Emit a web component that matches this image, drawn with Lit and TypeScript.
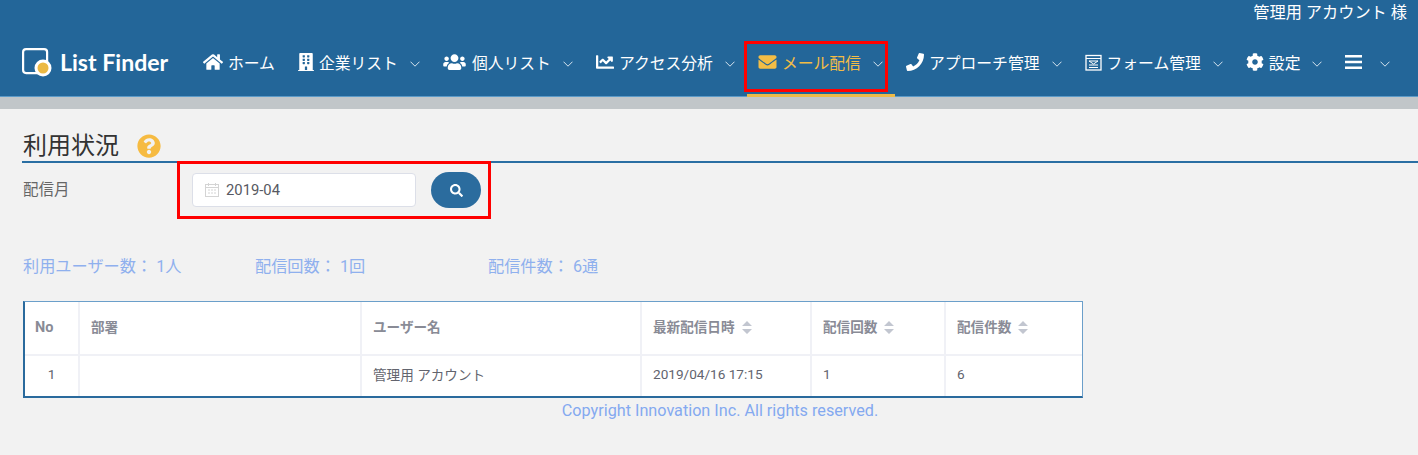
import { LitElement, html, css, svg } from "lit";
import { customElement } from "lit/decorators.js";

const chevron = html`<svg class="chev" viewBox="0 0 10 6"><path d="M.5 .7l4.500 4.500 4.500-4.500" fill="none" stroke="currentColor" stroke-width="1"/></svg>`;

const ic = (vb: string, d: string, cls = "") =>
  html`<svg class="ico ${cls}" viewBox="${vb}"><path fill="currentColor" d="${d}"/></svg>`;

const formIcon = html`<svg class="ico form" viewBox="0 0 17 17" fill="none" stroke="currentColor">
  <rect x="1" y="1.500" width="15" height="14.500" stroke-width="1.300"/>
  ${svg`<path d="M1 4.500h15M4 7h9l-4.500 3zM4 11h9M4 13.500h9" stroke-width="1"/>`}
</svg>`;

const NAV = [
  { label: "ホーム", chev: false, icon: ic("0 0 576 512", "M280.37 148.26L96 300.11V464a16 16 0 0 0 16 16l112.06-.29a16 16 0 0 0 15.92-16V368a16 16 0 0 1 16-16h64a16 16 0 0 1 16 16v95.64a16 16 0 0 0 16 16.05L464 480a16 16 0 0 0 16-16V300L295.67 148.26a12.19 12.19 0 0 0-15.3 0zM571.6 251.47L488 182.56V44.05a12 12 0 0 0-12-12h-56a12 12 0 0 0-12 12v72.61L318.47 43a48 48 0 0 0-61 0L4.34 251.47a12 12 0 0 0-1.6 16.9l25.5 31A12 12 0 0 0 45.15 301l235.22-193.74a12.19 12.19 0 0 1 15.3 0L530.9 301a12 12 0 0 0 16.9-1.6l25.5-31a12 12 0 0 0-1.7-16.93z") },
  { label: "企業リスト", chev: true, icon: ic("0 0 448 512", "M436 480h-20V24c0-13.255-10.745-24-24-24H56C42.745 0 32 10.745 32 24v456H12c-6.627 0-12 5.373-12 12v20h448v-20c0-6.627-5.373-12-12-12zM128 76c0-6.627 5.373-12 12-12h40c6.627 0 12 5.373 12 12v40c0 6.627-5.373 12-12 12h-40c-6.627 0-12-5.373-12-12V76zm0 96c0-6.627 5.373-12 12-12h40c6.627 0 12 5.373 12 12v40c0 6.627-5.373 12-12 12h-40c-6.627 0-12-5.373-12-12v-40zm52 148h-40c-6.627 0-12-5.373-12-12v-40c0-6.627 5.373-12 12-12h40c6.627 0 12 5.373 12 12v40c0 6.627-5.373 12-12 12zm76 160h-64v-84c0-6.627 5.373-12 12-12h40c6.627 0 12 5.373 12 12v84zm64-172c0 6.627-5.373 12-12 12h-40c-6.627 0-12-5.373-12-12v-40c0-6.627 5.373-12 12-12h40c6.627 0 12 5.373 12 12v40zm0-96c0 6.627-5.373 12-12 12h-40c-6.627 0-12-5.373-12-12v-40c0-6.627 5.373-12 12-12h40c6.627 0 12 5.373 12 12v40zm0-96c0 6.627-5.373 12-12 12h-40c-6.627 0-12-5.373-12-12V76c0-6.627 5.373-12 12-12h40c6.627 0 12 5.373 12 12v40z", "building") },
  { label: "個人リスト", chev: true, icon: ic("0 0 640 512", "M96 224c35.3 0 64-28.7 64-64s-28.7-64-64-64-64 28.7-64 64 28.7 64 64 64zm448 0c35.3 0 64-28.7 64-64s-28.7-64-64-64-64 28.7-64 64 28.7 64 64 64zm32 32h-64c-17.6 0-33.5 7.1-45.1 18.6 40.3 22.1 68.9 62 75.1 109.4h66c17.7 0 32-14.3 32-32v-32c0-35.3-28.7-64-64-64zm-256 0c61.9 0 112-50.1 112-112S381.9 32 320 32 208 82.1 208 144s50.1 112 112 112zm76.8 32h-8.3c-20.8 10-43.9 16-68.5 16s-47.6-6-68.5-16h-8.3C179.6 288 128 339.6 128 403.2V432c0 26.5 21.500 48 48 48h288c26.500 0 48-21.500 48-48v-28.800c0-63.600-51.600-115.200-115.200-115.200zm-223.700-13.400C161.500 263.100 145.600 256 128 256H64c-35.300 0-64 28.700-64 64v32c0 17.700 14.300 32 32 32h65.900c6.300-47.400 34.900-87.300 75.200-109.400z", "users") },
  { label: "アクセス分析", chev: true, icon: ic("0 0 512 512", "M496 384H64V80c0-8.84-7.16-16-16-16H16C7.16 64 0 71.16 0 80v336c0 17.67 14.33 32 32 32h464c8.84 0 16-7.16 16-16v-32c0-8.84-7.16-16-16-16zM464 96H345.94c-21.38 0-32.09 25.85-16.97 40.97l32.4 32.4L288 242.75l-73.37-73.37c-12.5-12.5-32.76-12.5-45.25 0l-68.69 68.69c-6.25 6.25-6.25 16.38 0 22.63l22.62 22.62c6.25 6.25 16.38 6.25 22.63 0L192 237.25l73.37 73.37c12.5 12.5 32.76 12.5 45.25 0l96-96 32.4 32.4c15.12 15.12 40.97 4.41 40.97-16.97V112c.01-8.84-7.15-16-15.99-16z", "w18") },
  { label: "メール配信", chev: true, active: true, icon: ic("0 0 512 512", "M502.3 190.8c3.9-3.1 9.7-.2 9.7 4.7V400c0 26.5-21.5 48-48 48H48c-26.5 0-48-21.5-48-48V195.6c0-5 5.7-7.8 9.7-4.7 22.4 17.4 52.1 39.5 154.1 113.6 21.1 15.4 56.7 47.8 92.2 47.6 35.7.3 72-32.8 92.3-47.6 102-74.1 131.6-96.3 154-113.7zM256 320c23.2.4 56.6-29.2 73.4-41.4 132.7-96.3 142.8-104.7 173.4-128.7 5.8-4.5 9.2-11.5 9.2-18.9v-19c0-26.5-21.5-48-48-48H48C21.5 64 0 85.5 0 112v19c0 7.4 3.4 14.3 9.2 18.9 30.6 23.9 40.7 32.4 173.4 128.7 16.8 12.2 50.2 41.8 73.4 41.4z", "w19") },
  { label: "アプローチ管理", chev: true, icon: ic("0 0 512 512", "M493.4 24.6l-104-24c-11.3-2.6-22.9 3.3-27.5 13.9l-48 112c-4.2 9.8-1.4 21.3 6.9 28l60.6 49.6c-36 76.7-98.9 140.5-177.2 177.2l-49.6-60.6c-6.8-8.3-18.2-11.1-28-6.9l-112 48C3.9 366.5-2 378.1.6 389.4l24 104C27.1 504.2 36.7 512 48 512c256.1 0 464-207.5 464-464 0-11.2-7.7-20.9-18.6-23.4z", "w18") },
  { label: "フォーム管理", chev: true, icon: formIcon },
  { label: "設定", chev: true, icon: ic("0 0 512 512", "M487.4 315.7l-42.6-24.6c4.3-23.2 4.3-47 0-70.2l42.6-24.6c4.9-2.8 7.1-8.6 5.5-14-11.1-35.6-30-67.8-54.7-94.6-3.8-4.1-10-5.1-14.8-2.3L380.8 110c-17.9-15.4-38.5-27.3-60.8-35.1V25.8c0-5.6-3.9-10.5-9.4-11.7-36.7-8.2-74.3-7.8-109.2 0-5.5 1.2-9.4 6.1-9.4 11.7V75c-22.2 7.9-42.8 19.8-60.8 35.1L88.7 85.5c-4.9-2.8-11-1.9-14.8 2.3-24.7 26.7-43.6 58.9-54.7 94.6-1.7 5.4.6 11.2 5.5 14L67.3 221c-4.3 23.2-4.3 47 0 70.2l-42.6 24.6c-4.9 2.8-7.1 8.6-5.5 14 11.1 35.6 30 67.8 54.7 94.6 3.8 4.1 10 5.1 14.8 2.3l42.6-24.6c17.9 15.4 38.5 27.3 60.8 35.1v49.2c0 5.6 3.9 10.5 9.4 11.7 36.7 8.2 74.3 7.8 109.2 0 5.5-1.2 9.4-6.1 9.4-11.7v-49.2c22.2-7.9 42.8-19.8 60.8-35.1l42.6 24.6c4.9 2.8 11 1.9 14.8-2.3 24.7-26.7 43.6-58.9 54.7-94.6 1.5-5.5-.7-11.3-5.6-14.1zM256 336c-44.1 0-80-35.9-80-80s35.9-80 80-80 80 35.9 80 80-35.9 80-80 80z", "w18") },
  { label: "", chev: true, icon: html`<svg class="ico bars" viewBox="0 0 17 14"><path fill="currentColor" d="M0 0h17v2.600H0zM0 5.700h17v2.600H0zM0 11.400h17V14H0z"/></svg>` },
];

const sortIcon = html`<svg class="sort" viewBox="0 0 10 13"><path fill="currentColor" d="M5 0l5 5H0zM0 8h10l-5 5z"/></svg>`;

const COLS = [
  { label: "No", cls: "c1" },
  { label: "部署", cls: "c2" },
  { label: "ユーザー名", cls: "c3" },
  { label: "最新配信日時", cls: "c4", sort: true },
  { label: "配信回数", cls: "c5", sort: true },
  { label: "配信件数", cls: "c6", sort: true },
];
const ROW = ["1", "", "管理用 アカウント", "2019/04/16 17:15", "1", "6"];

@customElement("app-root")
export class AppRoot extends LitElement {
  static styles = css`
    :host {
      display: block;
      position: relative;
      min-height: 455px;
      background: #f2f2f2;
      font-family: Roboto, "Noto Sans CJK JP", sans-serif;
      overflow: hidden;
    }
    .header { background: #236699; height: 97px; color: #fff; box-shadow: inset 0 -1px 0 #5b9ac8; }
    .user { height: 30px; display: flex; justify-content: flex-end; padding: 3px 11px 0 0; box-sizing: border-box; font-size: 16.200px; line-height: 20px; }
    .nav { display: flex; height: 67px; padding-left: 22px; }
    .logo { width: 170px; display: flex; align-items: center; gap: 8px; flex: none; padding-bottom: 3px; box-sizing: border-box; }
    .logo-mark { width: 30px; height: 30px; flex: none; }
    .logo-text { font-family: Lato, sans-serif; font-size: 23.100px; font-weight: 700; white-space: nowrap; }
    .item { display: flex; align-items: center; padding: 0 12px 0 11px; position: relative; font-size: 15.800px; white-space: nowrap; padding-bottom: 3px; box-sizing: border-box; }
    .item.active { color: #f3bd45; }
    .item.active::after { content: ""; position: absolute; left: 0; right: 0; bottom: 0; height: 3px; background: #eebb47; }
    .ico { height: 18px; width: 20px; flex: none; margin-right: 5px; }
    .ico.building { width: 16px; }
    .ico.users { width: 23px; margin-right: 6px; }
    .ico.w18 { width: 18px; }
    .ico.w19 { width: 19px; }
    .ico.form { width: 17px; margin-right: 5px; height: 17px; }
    .ico.bars { width: 17px; height: 14px; margin-right: 6px; }
    .chev { width: 10px; height: 6px; margin: 4px 0 0 12px; flex: none; color: #d5e3ee; }
    .band { height: 12px; background: #c1c6c9; }
    .content { padding: 22px 0 0 22px; }
    .title-row { display: flex; align-items: center; height: 30px; border-bottom: 2px solid #2a6fa3; color: #333; padding-left: 1px; }
    .title { font-size: 24px; line-height: 30px; margin: 0; font-weight: 400; }
    .help { width: 24px; height: 24px; margin-left: 18px; color: #f6bb42; flex: none; }
    .filter { display: flex; align-items: center; height: 51px; margin-left: 1px; }
    .filter-label { width: 169px; font-size: 15.500px; color: #666; flex: none; margin-top: -2px; }
    .input { width: 224px; height: 34px; box-sizing: border-box; background: #fff; border: 1px solid #dcdfe8; border-radius: 4px; display: flex; align-items: center; padding-left: 12px; gap: 7px; font-size: 14.800px; color: #575962; margin-top: 3px; }
    .cal { width: 14px; height: 14px; color: #d4d4d4; flex: none; }
    .search { width: 50px; height: 36px; border-radius: 18px; background: #2b6c9e; border: 0; margin-left: 15px; padding: 0; display: flex; align-items: center; justify-content: center; color: #fff; margin-top: 3px; }
    .search svg { width: 13px; height: 13px; }
    .summary { display: flex; height: 24px; margin-top: 39px; align-items: center; margin-left: 1px; font-size: 16.200px; color: #8fb0ee; }
    .s1 { width: 232px; }
    .s2 { width: 233px; }
    table { border-collapse: separate; border-spacing: 0; table-layout: fixed; width: 1059px; margin: 24px 0 0 1px; background: #fff; border: 1px solid #6b9fca; border-left: 2px solid #2a6a9d; border-bottom: 2px solid #2a6a9d; box-sizing: border-box; font-size: 13.600px; }
    th, td { padding: 0 0 4px 11px; text-align: left; border-right: 2px solid #f0f1f6; box-sizing: border-box; }
    th:last-child, td:last-child { border-right: 0; }
    th { height: 54px; border-bottom: 2px solid #f0f1f6; color: #898b96; font-weight: 700; padding-bottom: 5px; }
    th.c1 { font-size: 14.500px; padding: 0 0 1px 10px; }
    td { height: 40px; color: #62646e; }
    td.c1 { text-align: center; padding: 0 0 4px; }
    .c1 { width: 55px; } .c2 { width: 282px; } .c3 { width: 280px; } .c4 { width: 170px; } .c5 { width: 134px; } .c6 { width: 136px; }
    .sort { width: 10px; height: 13px; margin-left: 7px; color: #c2c6d0; vertical-align: -2px; }
    .copy { margin-top: 2px; text-align: center; width: 1396px; font-size: 16.200px; line-height: 21px; color: #84a9f0; }
    .mark { position: absolute; border: 3px solid #f00; box-sizing: border-box; pointer-events: none; }
    .m1 { left: 744px; top: 41px; width: 144px; height: 51px; }
    .m2 { left: 177px; top: 161px; width: 314px; height: 58px; }
  `;

  render() {
    return html`
      <header class="header">
        <div class="user">管理用 アカウント 様</div>
        <nav class="nav">
          <div class="logo">
            <svg class="logo-mark" viewBox="0 0 30 30">
              <rect x="1.100" y="2.100" width="24" height="24" rx="3" fill="none" stroke="#fff" stroke-width="2.200"/>
              <circle cx="21" cy="21" r="8.500" fill="#fff"/>
              <circle cx="21" cy="21" r="5.500" fill="#ebb944"/>
            </svg>
            <span class="logo-text">List Finder</span>
          </div>
          ${NAV.map(
            (n) => html`<div class="item ${n.active ? "active" : ""}">
              ${n.icon}${n.label ? html`<span>${n.label}</span>` : ""}${n.chev ? chevron : ""}
            </div>`
          )}
        </nav>
      </header>
      <div class="band"></div>
      <main class="content">
        <div class="title-row">
          <h1 class="title">利用状況</h1>
          <svg class="help" viewBox="0 0 512 512"><path fill="currentColor" d="M504 256c0 136.997-111.043 248-248 248S8 392.997 8 256C8 119.083 119.043 8 256 8s248 111.083 248 248zM262.655 90c-54.497 0-89.255 22.957-116.549 63.758-3.536 5.286-2.353 12.415 2.715 16.258l34.699 26.31c5.205 3.947 12.621 3.008 16.665-2.122 17.864-22.658 30.113-35.797 57.303-35.797 20.429 0 45.698 13.148 45.698 32.958 0 14.976-12.363 22.667-32.534 33.976C247.128 238.528 216 254.941 216 296v4c0 6.627 5.373 12 12 12h56c6.627 0 12-5.373 12-12v-1.333c0-28.462 83.186-29.647 83.186-106.667 0-58.002-60.165-102-116.531-102zM256 338c-25.365 0-46 20.635-46 46 0 25.364 20.635 46 46 46s46-20.636 46-46c0-25.365-20.635-46-46-46z"/></svg>
        </div>
        <div class="filter">
          <div class="filter-label">配信月</div>
          <div class="input">
            <svg class="cal" viewBox="0 0 14 14" fill="none" stroke="currentColor"><rect x="0.500" y="1.500" width="13" height="12"/><path d="M0.500 4.500h13M3.500 0v3M10.500 0v3M3 7h2M6 7h2M9 7h2M3 10h2M6 10h2M9 10h2"/></svg>
            <span>2019-04</span>
          </div>
          <button class="search" aria-label="検索"><svg viewBox="0 0 512 512"><path fill="currentColor" d="M505 442.700L405.300 343c-4.500-4.500-10.600-7-17-7H372c27.600-35.300 44-79.700 44-128C416 93.100 322.900 0 208 0S0 93.100 0 208s93.100 208 208 208c48.300 0 92.700-16.400 128-44v16.300c0 6.400 2.500 12.500 7 17l99.700 99.700c9.400 9.400 24.600 9.400 33.900 0l28.300-28.300c9.400-9.400 9.400-24.600.1-34zM208 336c-70.700 0-128-57.200-128-128 0-70.700 57.200-128 128-128 70.700 0 128 57.200 128 128 0 70.700-57.200 128-128 128z"/></svg></button>
        </div>
        <div class="summary">
          <span class="s1">利用ユーザー数： 1人</span>
          <span class="s2">配信回数： 1回</span>
          <span>配信件数： 6通</span>
        </div>
        <table>
          <thead>
            <tr>${COLS.map((c) => html`<th class="${c.cls}">${c.label}${c.sort ? sortIcon : ""}</th>`)}</tr>
          </thead>
          <tbody>
            <tr>${ROW.map((v, i) => html`<td class="${COLS[i].cls}">${v}</td>`)}</tr>
          </tbody>
        </table>
        <div class="copy">Copyright Innovation Inc. All rights reserved.</div>
      </main>
      <div class="mark m1"></div>
      <div class="mark m2"></div>
    `;
  }
}
